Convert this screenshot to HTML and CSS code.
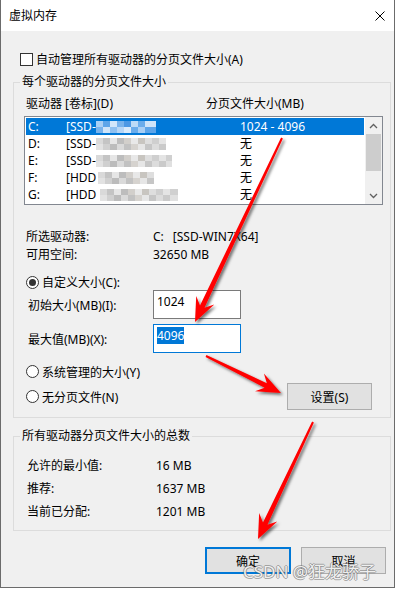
FILE: index.html
```html
<!DOCTYPE html>
<html lang="zh-CN">
<head>
    <meta charset="UTF-8">
    <title>虚拟内存</title>
    <link rel="stylesheet" href="styles.css">
</head>
<body>
    <div class="window">
        <div class="titlebar">
            <span class="title">虚拟内存</span>
            <svg class="close" width="10" height="10" viewBox="0 0 10 10">
                <path d="M0.5 0.5L9.5 9.5M9.5 0.5L0.5 9.5" stroke="#000" stroke-width="1" fill="none"/>
            </svg>
        </div>

        <div class="content">
            <div class="check-row">
                <span class="checkbox"></span>
                <span>自动管理所有驱动器的分页文件大小(A)</span>
            </div>

            <fieldset class="group group-drives">
                <legend>每个驱动器的分页文件大小</legend>
                <div class="list-head">
                    <span>驱动器 [卷标](D)</span>
                    <span>分页文件大小(MB)</span>
                </div>

                <div class="listbox">
                    <div class="rows">
                        <div class="row selected">
                            <span>C:</span>
                            <span>[SSD-<i class="blur blur-sel blur-c"></i></span>
                            <span>1024 - 4096</span>
                        </div>
                        <div class="row">
                            <span>D:</span>
                            <span>[SSD-<i class="blur blur-d"></i></span>
                            <span>无</span>
                        </div>
                        <div class="row">
                            <span>E:</span>
                            <span>[SSD-<i class="blur blur-e"></i></span>
                            <span>无</span>
                        </div>
                        <div class="row">
                            <span>F:</span>
                            <span>[HDD<i class="blur blur-f"></i></span>
                            <span>无</span>
                        </div>
                        <div class="row">
                            <span>G:</span>
                            <span>[HDD<i class="blur blur-g"></i></span>
                            <span>无</span>
                        </div>
                    </div>
                    <div class="scrollbar">
                        <div class="sb-btn">
                            <svg width="9" height="6" viewBox="0 0 9 6"><path d="M1 5L4.5 1.5L8 5" stroke="#606060" stroke-width="1.3" fill="none"/></svg>
                        </div>
                        <div class="sb-track"><div class="sb-thumb"></div></div>
                        <div class="sb-btn">
                            <svg width="9" height="6" viewBox="0 0 9 6"><path d="M1 1L4.5 4.5L8 1" stroke="#606060" stroke-width="1.3" fill="none"/></svg>
                        </div>
                    </div>
                </div>

                <div class="info">
                    <div class="info-row">
                        <span>所选驱动器:</span>
                        <span>C:<span class="vol-name">[SSD-WIN7X64]</span></span>
                    </div>
                    <div class="info-row">
                        <span>可用空间:</span>
                        <span>32650 MB</span>
                    </div>
                </div>

                <div class="option option-custom">
                    <span class="radio checked"></span>
                    <span>自定义大小(C):</span>
                </div>

                <div class="field-row">
                    <span class="field-label">初始大小(MB)(I):</span>
                    <div class="textbox">1024</div>
                </div>
                <div class="field-row">
                    <span class="field-label">最大值(MB)(X):</span>
                    <div class="textbox focused"><span class="sel">4096</span></div>
                </div>

                <div class="option option-system">
                    <span class="radio"></span>
                    <span>系统管理的大小(Y)</span>
                </div>

                <div class="option-last">
                    <div class="option">
                        <span class="radio"></span>
                        <span>无分页文件(N)</span>
                    </div>
                    <button class="btn">设置(S)</button>
                </div>
            </fieldset>

            <fieldset class="group group-total">
                <legend>所有驱动器分页文件大小的总数</legend>
                <div class="totals">
                    <div class="total-row">
                        <span>允许的最小值:</span>
                        <span>16 MB</span>
                    </div>
                    <div class="total-row">
                        <span>推荐:</span>
                        <span>1637 MB</span>
                    </div>
                    <div class="total-row">
                        <span>当前已分配:</span>
                        <span>1201 MB</span>
                    </div>
                </div>
            </fieldset>

            <div class="actions">
                <button class="btn btn-default">确定</button>
                <button class="btn">取消</button>
            </div>
        </div>
    </div>

    <!-- 标注箭头 -->
    <svg class="annotations" width="396" height="589" viewBox="0 0 396 589">
        <defs>
            <filter id="shadow" x="-20%" y="-20%" width="140%" height="140%">
                <feDropShadow dx="2" dy="2" stdDeviation="1.5" flood-color="#000" flood-opacity="0.55"/>
            </filter>
        </defs>
        <g fill="#ff0000" filter="url(#shadow)">
            <path d="M282.9 138.43L204.53 307.7L214.3 304.58L195 322L196.22 296.03L200.01 305.56L281.1 137.57Z"/>
            <path d="M205.56 356.9L264.64 387.72L255.04 391.35L281 393L263.9 373.41L266.86 383.24L206.44 355.1Z"/>
            <path d="M313.9 422.43L267.49 524.68L277.26 521.53L258 539L259.16 513.03L262.97 522.56L312.1 421.57Z"/>
        </g>
    </svg>
    <div class="watermark">CSDN @狂龙骄子</div>
</body>
</html>
```

FILE: styles.css
```css
* {
    margin: 0;
    padding: 0;
    box-sizing: border-box;
}

body {
    font-family: "Noto Sans", "Noto Sans CJK SC", sans-serif;
    font-size: 12px;
    color: #000;
    background: #fff;
    position: relative;
    width: 396px;
    height: 589px;
    overflow: hidden;
}

.window {
    width: 395px;
    height: 588px;
    background: #f0f0f0;
    border: 1px solid #6b6b6b;
    border-top: none;
    display: flex;
    flex-direction: column;
}

.titlebar {
    height: 31px;
    background: #fff;
    display: flex;
    align-items: center;
    justify-content: space-between;
    padding: 0 9px 0 8px;
}

.title {
    line-height: 16px;
}

.content {
    flex: 1;
    padding-left: 12px;
}

.check-row {
    display: flex;
    align-items: center;
    gap: 3px;
    height: 18px;
    margin: 19px 0 0 7px;
}

.checkbox {
    width: 13px;
    height: 13px;
    border: 1px solid #333;
    background: #fff;
}

/* 分组框 */
.group {
    width: 378px;
    border: 1px solid #dcdcdc;
    padding: 0 7px 7px 10px;
    margin-top: 6px;
    min-inline-size: 0;
}

.group legend {
    line-height: 16px;
    padding: 0 2px;
    margin-left: -4px;
}

.group-total {
    margin-top: 10px;
}

.list-head {
    display: grid;
    grid-template-columns: 180px auto;
    margin-top: 6px;
    padding-left: 2px;
    line-height: 16px;
}

/* 列表框 */
.listbox {
    display: flex;
    height: 89px;
    margin-top: 4px;
    border: 1px solid #828790;
    background: #fff;
}

.rows {
    flex: 1;
    padding: 1px;
}

.row {
    display: grid;
    grid-template-columns: 38px 174px auto;
    height: 17px;
    line-height: 17px;
    padding-left: 2px;
    white-space: nowrap;
}

.row.selected {
    background: #0078d7;
    color: #fff;
}

.blur {
    display: inline-block;
    height: 12px;
    vertical-align: -2px;
    background:
        linear-gradient(90deg, #d9d9d9 0 7px, #c4c4c4 7px 14px, #e6e6e6 14px 21px, #bdbdbd 21px 28px, #d2cfcb 28px 35px, #e8e8e8 35px 42px, #c8c5c0 42px 49px, #dedede 49px 56px, #cfcfcf 56px 63px, #e4e4e4 63px 70px, #d0d0d0 70px) top / 100% 6px no-repeat,
        linear-gradient(90deg, #e2e2e2 0 7px, #d0d0d0 7px 14px, #bcbcbc 14px 21px, #dadada 21px 28px, #c2c2c2 28px 35px, #d6d3cf 35px 42px, #e6e6e6 42px 49px, #c6c6c6 49px 56px, #dcdcdc 56px 63px, #cacaca 63px 70px, #e0e0e0 70px) bottom / 100% 6px no-repeat;
}

.blur-sel {
    background:
        linear-gradient(90deg, #a9cff5 0 7px, #5ea5e9 7px 14px, #d2e6fa 14px 21px, #79b3ec 21px 28px, #4d98e4 28px 35px, #bcdaf7 35px 42px, #6aaceb 42px 49px, #cfe4f9 49px) top / 100% 6px no-repeat,
        linear-gradient(90deg, #79b3ec 0 7px, #cfe4f9 7px 14px, #8fc0f0 14px 21px, #b7d6f6 21px 28px, #d9eafb 28px 35px, #6aaceb 35px 42px, #a9cff5 42px 49px, #5ea5e9 49px) bottom / 100% 6px no-repeat;
}

.blur-c { width: 60px; }
.blur-d { width: 70px; }
.blur-e { width: 76px; }
.blur-f { width: 56px; margin-left: 2px; }
.blur-g { width: 78px; margin-left: 4px; }

.scrollbar {
    width: 17px;
    display: flex;
    flex-direction: column;
    background: #f0f0f0;
}

.sb-btn {
    height: 17px;
    display: flex;
    align-items: center;
    justify-content: center;
}

.sb-track {
    flex: 1;
    padding: 0 1px;
}

.sb-thumb {
    height: 37px;
    background: #cdcdcd;
}

/* 驱动器信息 */
.info {
    margin-top: 23px;
    padding-left: 2px;
    line-height: 18px;
}

.info-row {
    display: grid;
    grid-template-columns: 127px auto;
}

.vol-name {
    margin-left: 9px;
}

.option {
    display: flex;
    align-items: center;
    gap: 3px;
    padding-left: 2px;
}

.option-custom {
    height: 16px;
    margin-top: 10px;
}

.option-system {
    height: 17px;
    margin-top: 10px;
}

.option-last {
    display: flex;
    align-items: center;
    justify-content: space-between;
    height: 27px;
    margin-top: 3px;
    padding-right: 11px;
}

.radio {
    width: 13px;
    height: 13px;
    border: 1px solid #333;
    border-radius: 50%;
    background: #fff;
    display: flex;
    align-items: center;
    justify-content: center;
}

.radio.checked::after {
    content: "";
    width: 7px;
    height: 7px;
    border-radius: 50%;
    background: #333;
}

.field-row {
    display: grid;
    grid-template-columns: 129px 88px;
    align-items: center;
    height: 29px;
}

.field-row + .field-row {
    margin-top: 5px;
}

.field-label {
    padding-left: 4px;
}

.textbox {
    height: 29px;
    border: 1px solid #7a7a7a;
    background: #fff;
    padding: 3px;
    line-height: 16px;
}

.textbox.focused {
    border-color: #0078d7;
    padding-top: 2px;
}

.sel {
    display: inline-block;
    background: #0078d7;
    color: #fff;
    line-height: 17px;
}

/* 总数 */
.totals {
    margin-top: 10px;
    padding-left: 3px;
    line-height: 23px;
}

.total-row {
    display: grid;
    grid-template-columns: 129px auto;
}

.btn {
    width: 85px;
    height: 27px;
    background: #e1e1e1;
    border: 1px solid #adadad;
    font: inherit;
    color: #000;
}

.btn-default {
    width: 86px;
    border: 2px solid #0078d7;
}

.actions {
    display: flex;
    justify-content: flex-end;
    gap: 10px;
    margin-top: 16px;
    padding-right: 8px;
}

/* 覆盖层 */
.annotations {
    position: absolute;
    left: 0;
    top: 0;
    pointer-events: none;
}

.watermark {
    position: absolute;
    left: 243px;
    top: 561px;
    font-size: 17px;
    line-height: 22px;
    color: rgba(255, 255, 255, 0.9);
    text-shadow:
        -1px 0 rgba(110, 110, 110, 0.55),
        1px 0 rgba(110, 110, 110, 0.55),
        0 -1px rgba(110, 110, 110, 0.55),
        0 1px rgba(110, 110, 110, 0.55);
    white-space: nowrap;
}
```
